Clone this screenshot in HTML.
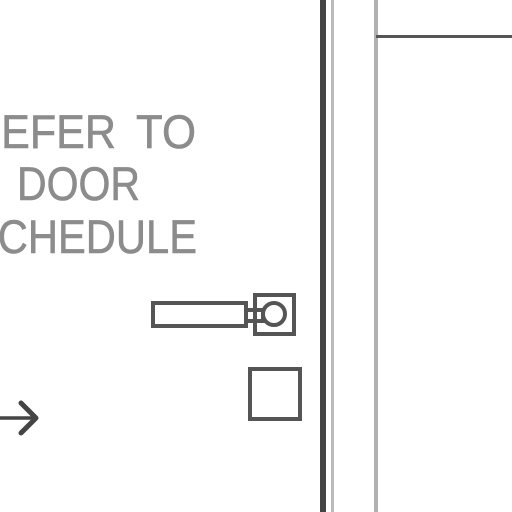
<!DOCTYPE html>
<html><head><meta charset="utf-8"><style>
html,body{margin:0;padding:0;background:#fff;}
svg{display:block;}
text{font-family:"Liberation Sans",sans-serif;font-size:47px;fill:#8c8c8c;stroke:#8c8c8c;stroke-width:0.6px;}
</style></head><body>
<svg width="512" height="512" viewBox="0 0 512 512" xmlns="http://www.w3.org/2000/svg">
<rect width="512" height="512" fill="#fff"/>
<text x="-30" y="148" textLength="146" lengthAdjust="spacingAndGlyphs">REFER</text>
<text x="136" y="148" textLength="60" lengthAdjust="spacingAndGlyphs">TO</text>
<text x="17" y="200" textLength="123" lengthAdjust="spacingAndGlyphs">DOOR</text>
<text x="-30" y="253" textLength="227" lengthAdjust="spacingAndGlyphs">SCHEDULE</text>
<g fill="none" stroke="#555" stroke-width="4">
<rect x="153" y="303" width="93" height="23"/>
<rect x="246" y="310" width="17" height="11"/>
<rect x="255" y="295" width="39" height="39"/>
<circle cx="274" cy="314" r="11" fill="#fff"/>
<rect x="250" y="369" width="50" height="50"/>
</g>
<g stroke="#444" stroke-width="5" fill="none" stroke-linecap="round" stroke-linejoin="round">
<line x1="-2" y1="418" x2="34" y2="418" stroke-width="3.5"/>
<polyline points="21,403 36,418 21,433"/>
</g>
<rect x="320" y="0" width="6" height="512" fill="#444"/>
<rect x="331" y="0" width="3" height="512" fill="#bbb"/>
<rect x="374" y="0" width="4" height="512" fill="#b0b0b0"/>
<rect x="376" y="35" width="136" height="3" fill="#555"/>
</svg>
</body></html>
